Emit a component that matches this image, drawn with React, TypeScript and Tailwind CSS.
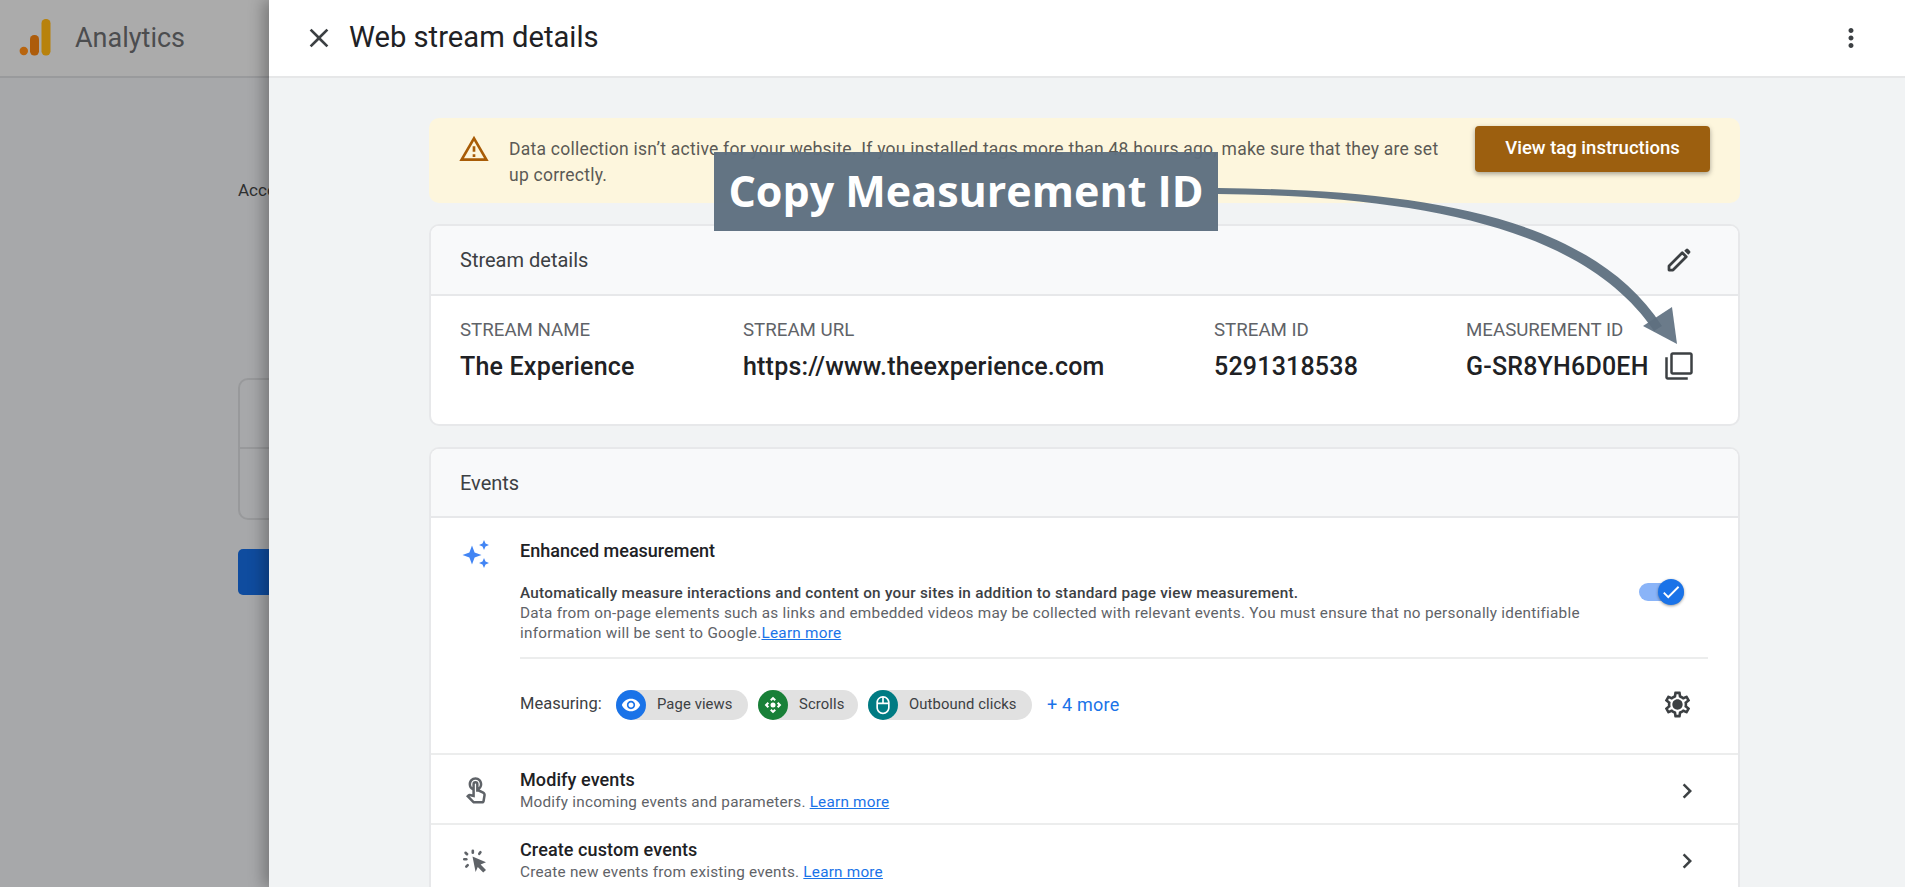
import { MdCheck, MdChevronRight, MdClose, MdMoreVert, MdOutlineControlCamera, MdOutlineFilterNone, MdOutlineMouse, MdOutlineSettings, MdOutlineTouchApp, MdOutlineWarningAmber, MdVisibility } from 'react-icons/md';

const roboto = 'font-[Roboto,sans-serif]';

function Logo() {
  return (
    <svg width="32" height="38" viewBox="0 0 32 38" className="shrink-0">
      <circle cx="4.8" cy="32" r="4.2" fill="#b8650f" />
      <rect x="11" y="16" width="9" height="20.5" rx="4.2" fill="#ad5c0b" />
      <rect x="22.5" y="0" width="9" height="36.5" rx="4.2" fill="#b8820c" />
    </svg>
  );
}

function Sparkles() {
  return (
    <svg width="28" height="28" viewBox="0 0 28 28" fill="#4285f4">
      <path d="M10 5.5 L12.6 12.4 L19.5 15 L12.6 17.6 L10 24.5 L7.4 17.6 L0.5 15 L7.4 12.4 Z" />
      <path d="M22 0 L23.5 3.5 L27 5 L23.5 6.5 L22 10 L20.5 6.5 L17 5 L20.5 3.5 Z" />
      <path d="M22 18 L23.5 21.5 L27 23 L23.5 24.5 L22 28 L20.5 24.5 L17 23 L20.5 21.5 Z" />
    </svg>
  );
}

function ClickIcon() {
  return (
    <svg width="26" height="24" viewBox="0 0 26 24" fill="#5f6368" className="-ml-[3px]">
      <path d="M10.5 7.5 L24 13.2 L18.6 15.4 L24 21 L21.2 23.6 L15.8 18 L13.6 23 Z" />
      <rect x="9.5" y="0.5" width="2.6" height="4.6" rx="1.3" />
      <rect x="1" y="9" width="4.6" height="2.6" rx="1.3" />
      <rect x="16.6" y="1.8" width="2.6" height="4.6" rx="1.3" transform="rotate(35 18 4)" />
      <rect x="3" y="2.2" width="2.6" height="4.6" rx="1.3" transform="rotate(-45 4.3 4.5)" />
      <rect x="3.6" y="14.6" width="2.6" height="4.6" rx="1.3" transform="rotate(45 5 17)" />
    </svg>
  );
}

function EditIcon() {
  return (
    <svg width="30" height="30" viewBox="0 0 24 24" className="text-[#3c4043]">
      <path d="M4 20v-3.2L14.6 6.2l3.2 3.2L7.2 20Z" fill="none" stroke="currentColor" strokeWidth="2.2" strokeLinejoin="round" />
      <path d="M16.2 4.6l1.4-1.4a1.2 1.2 0 0 1 1.7 0l1.5 1.5a1.2 1.2 0 0 1 0 1.7l-1.4 1.4Z" fill="currentColor" />
    </svg>
  );
}

function Chip({ icon, bg, label, width }: { icon: React.ReactNode; bg: string; label: string; width: string }) {
  return (
    <div className={`flex h-[30px] items-center rounded-full bg-[#e1e1e1] ${width}`}>
      <span className={`flex size-[30px] shrink-0 items-center justify-center rounded-full text-white ${bg}`}>{icon}</span>
      <span className="ml-[11px] text-[14.8px] tracking-[0.1px] text-[#3c4043]">{label}</span>
    </div>
  );
}

function LinkRow({ icon, title, text, linkText }: { icon: React.ReactNode; title: string; text: string; linkText: string }) {
  return (
    <div className="flex h-[70px] items-center border-t-2 border-[#eceded] pt-[3px] pr-[36px]">
      <div className="flex w-[89px] justify-center pl-[1px]">{icon}</div>
      <div className="flex-1">
        <div className="text-[18px] leading-[22px] font-medium tracking-[0.1px] text-[#202124]">{title}</div>
        <div className="text-[15.3px] leading-[22px] tracking-[0.22px] text-[#5f6368]">
          {text} <span className="text-[#1a73e8] underline">{linkText}</span>
        </div>
      </div>
      <MdChevronRight size={30} className="text-[#3c4043]" />
    </div>
  );
}

function StreamField({ label, value, width }: { label: string; value: string; width: string }) {
  return (
    <div className={width}>
      <div className="text-[18.7px] leading-[24px] text-[#5f6368]">{label}</div>
      <div className="mt-[10px] text-[25px] leading-[30px] font-medium tracking-[0.2px] whitespace-nowrap text-[#202124]">{value}</div>
    </div>
  );
}

export default function App() {
  return (
    <div className={`relative flex h-[887px] w-[1905px] overflow-hidden bg-[#a7a8aa] ${roboto}`}>
      {/* page dimmed behind the drawer */}
      <div className="w-[269px] shrink-0 overflow-hidden">
        <div className="flex h-[78px] items-center gap-[24px] border-b-2 border-[#999a9c] bg-[#ababab] pl-[19px]">
          <Logo />
          <span className="text-[27px] text-[#4c4d4f]">Analytics</span>
        </div>
        <div className="pt-[100px] pl-[238px]">
          <div className="text-[17px] leading-[24px] whitespace-nowrap text-[#2f3031]">Account</div>
          <div className="mt-[176px] h-[142px] w-[60px] rounded-[10px] border-2 border-[#98999b]">
            <div className="h-[69px] border-b-2 border-[#98999b]" />
          </div>
          <div className="mt-[29px] h-[46px] w-[60px] rounded-[5px] bg-[#0f4c9f]" />
        </div>
      </div>

      {/* drawer */}
      <div className="relative flex-1 bg-[#f1f3f4] shadow-[-6px_0_14px_rgba(0,0,0,0.28)]">
        <div className="flex h-[78px] items-center border-b-2 border-[#e6e7e8] bg-white pr-[39px] pl-[34px]">
          <MdClose size={32} className="text-[#3c4043]" />
          <h1 className="ml-[14px] flex-1 text-[29.2px] text-[#202124]">Web stream details</h1>
          <MdMoreVert size={30} className="text-[#3c4043]" />
        </div>

        <div className="ml-[160px] flex w-[1311px] flex-col gap-[21px] pt-[40px]">
          <div className="flex h-[85px] rounded-[10px] bg-[#fdf6dd] pr-[30px] pl-[29px]">
            <MdOutlineWarningAmber size={32} className="mt-[15px] text-[#a85c06]" />
            <p className="mt-[19px] ml-[19px] w-[945px] text-[17.5px] leading-[25.5px] tracking-[0.24px] text-[#5b5a55]">
              Data collection isn’t active for your website. If you installed tags more than 48 hours ago, make sure that they are set up correctly.
            </p>
            <button className="mt-[8px] ml-auto h-[46px] w-[235px] rounded-[4px] bg-[#9c5f0f] text-[18.5px] font-medium text-white shadow-[0_2px_5px_rgba(0,0,0,0.35)]">
              View tag instructions
            </button>
          </div>

          <div className="h-[202px] overflow-hidden rounded-[10px] border-2 border-[#e7e8ea] bg-white">
            <div className="flex h-[70px] items-center border-b-2 border-[#e7e8ea] bg-[#f8f9fa] pr-[44px] pl-[29px]">
              <span className="flex-1 text-[20px] text-[#3c4043]">Stream details</span>
              <EditIcon />
            </div>
            <div className="flex pt-[22px] pl-[29px]">
              <StreamField label="STREAM NAME" value="The Experience" width="w-[283px]" />
              <StreamField label="STREAM URL" value="https://www.theexperience.com" width="w-[471px]" />
              <StreamField label="STREAM ID" value="5291318538" width="w-[252px]" />
              <StreamField label="MEASUREMENT ID" value="G-SR8YH6D0EH" width="w-[198px]" />
              <MdOutlineFilterNone size={30} className="mt-[33px] text-[#3c4043]" />
            </div>
          </div>

          <div className="overflow-hidden rounded-t-[10px] border-2 border-b-0 border-[#e7e8ea] bg-white">
            <div className="flex h-[69px] items-center border-b-2 border-[#e7e8ea] bg-[#f8f9fa] pl-[29px] text-[20px] text-[#3c4043]">Events</div>
            <div className="flex pt-[20px] pr-[30px]">
              <div className="flex w-[89px] justify-center pt-[2px]">
                <Sparkles />
              </div>
              <div className="flex-1">
                <div className="flex">
                  <div className="flex-1">
                    <div className="text-[18px] leading-[26px] font-medium text-[#202124]">Enhanced measurement</div>
                    <div className="mt-[19px] w-[1095px] text-[15.3px] leading-[20px] tracking-[0.25px] text-[#5f6368]">
                      <div className="font-medium text-[#3c4043]">Automatically measure interactions and content on your sites in addition to standard page view measurement.</div>
                      Data from on-page elements such as links and embedded videos may be collected with relevant events. You must ensure that no personally identifiable information will be sent to Google.
                      <span className="text-[#1a73e8] underline">Learn more</span>
                    </div>
                  </div>
                  <div className="relative mt-[45px] mr-[24px] h-[18px] w-[45px] rounded-full bg-[#8ab4f8]">
                    <span className="absolute top-[-4px] right-0 flex size-[26px] items-center justify-center rounded-full bg-[#1a73e8] text-white shadow-[0_1px_3px_rgba(0,0,0,0.4)]">
                      <MdCheck size={22} />
                    </span>
                  </div>
                </div>
                <div className="mt-[14px] flex h-[96px] items-center border-t-2 border-[#eceded] pb-[3px]">
                  <span className="w-[96px] text-[16.5px] text-[#3c4043]">Measuring:</span>
                  <div className="flex gap-[10px]">
                    <Chip icon={<MdVisibility size={20} />} bg="bg-[#1a73e8]" label="Page views" width="w-[132px]" />
                    <Chip icon={<MdOutlineControlCamera size={20} />} bg="bg-[#188038]" label="Scrolls" width="w-[100px]" />
                    <Chip icon={<MdOutlineMouse size={20} />} bg="bg-[#007b83]" label="Outbound clicks" width="w-[164px]" />
                  </div>
                  <span className="ml-[15px] flex-1 text-[18px] tracking-[0.2px] text-[#1a73e8]">+ 4 more</span>
                  <span className="relative mr-[15px] flex size-[31px] items-center justify-center text-[#3c4043]">
                    <MdOutlineSettings size={31} />
                    <span className="absolute size-[9px] rounded-full bg-[#3c4043]" />
                  </span>
                </div>
              </div>
            </div>
            <LinkRow icon={<MdOutlineTouchApp size={30} className="text-[#5f6368]" />} title="Modify events" text="Modify incoming events and parameters." linkText="Learn more" />
            <LinkRow icon={<ClickIcon />} title="Create custom events" text="Create new events from existing events." linkText="Learn more" />
          </div>
        </div>
      </div>

      {/* annotation laid over the screenshot */}
      <div className="absolute top-[152px] left-[714px] flex h-[79px] w-[504px] items-center justify-center bg-[#5e7080]/97 font-['Open_Sans',sans-serif] text-[43px] font-bold whitespace-nowrap text-white">
        Copy Measurement ID
      </div>
      <svg className="pointer-events-none absolute top-0 left-0" width="1905" height="887" viewBox="0 0 1905 887">
        <path d="M1218 188 C1420 190 1590 215 1662 326 L1654 331 C1585 228 1420 196 1218 194 Z" fill="#5e7080" fillOpacity="0.95" />
        <path d="M1677 344 L1672 307 L1643 326 Z" fill="#5e7080" fillOpacity="0.92" />
      </svg>
    </div>
  );
}
